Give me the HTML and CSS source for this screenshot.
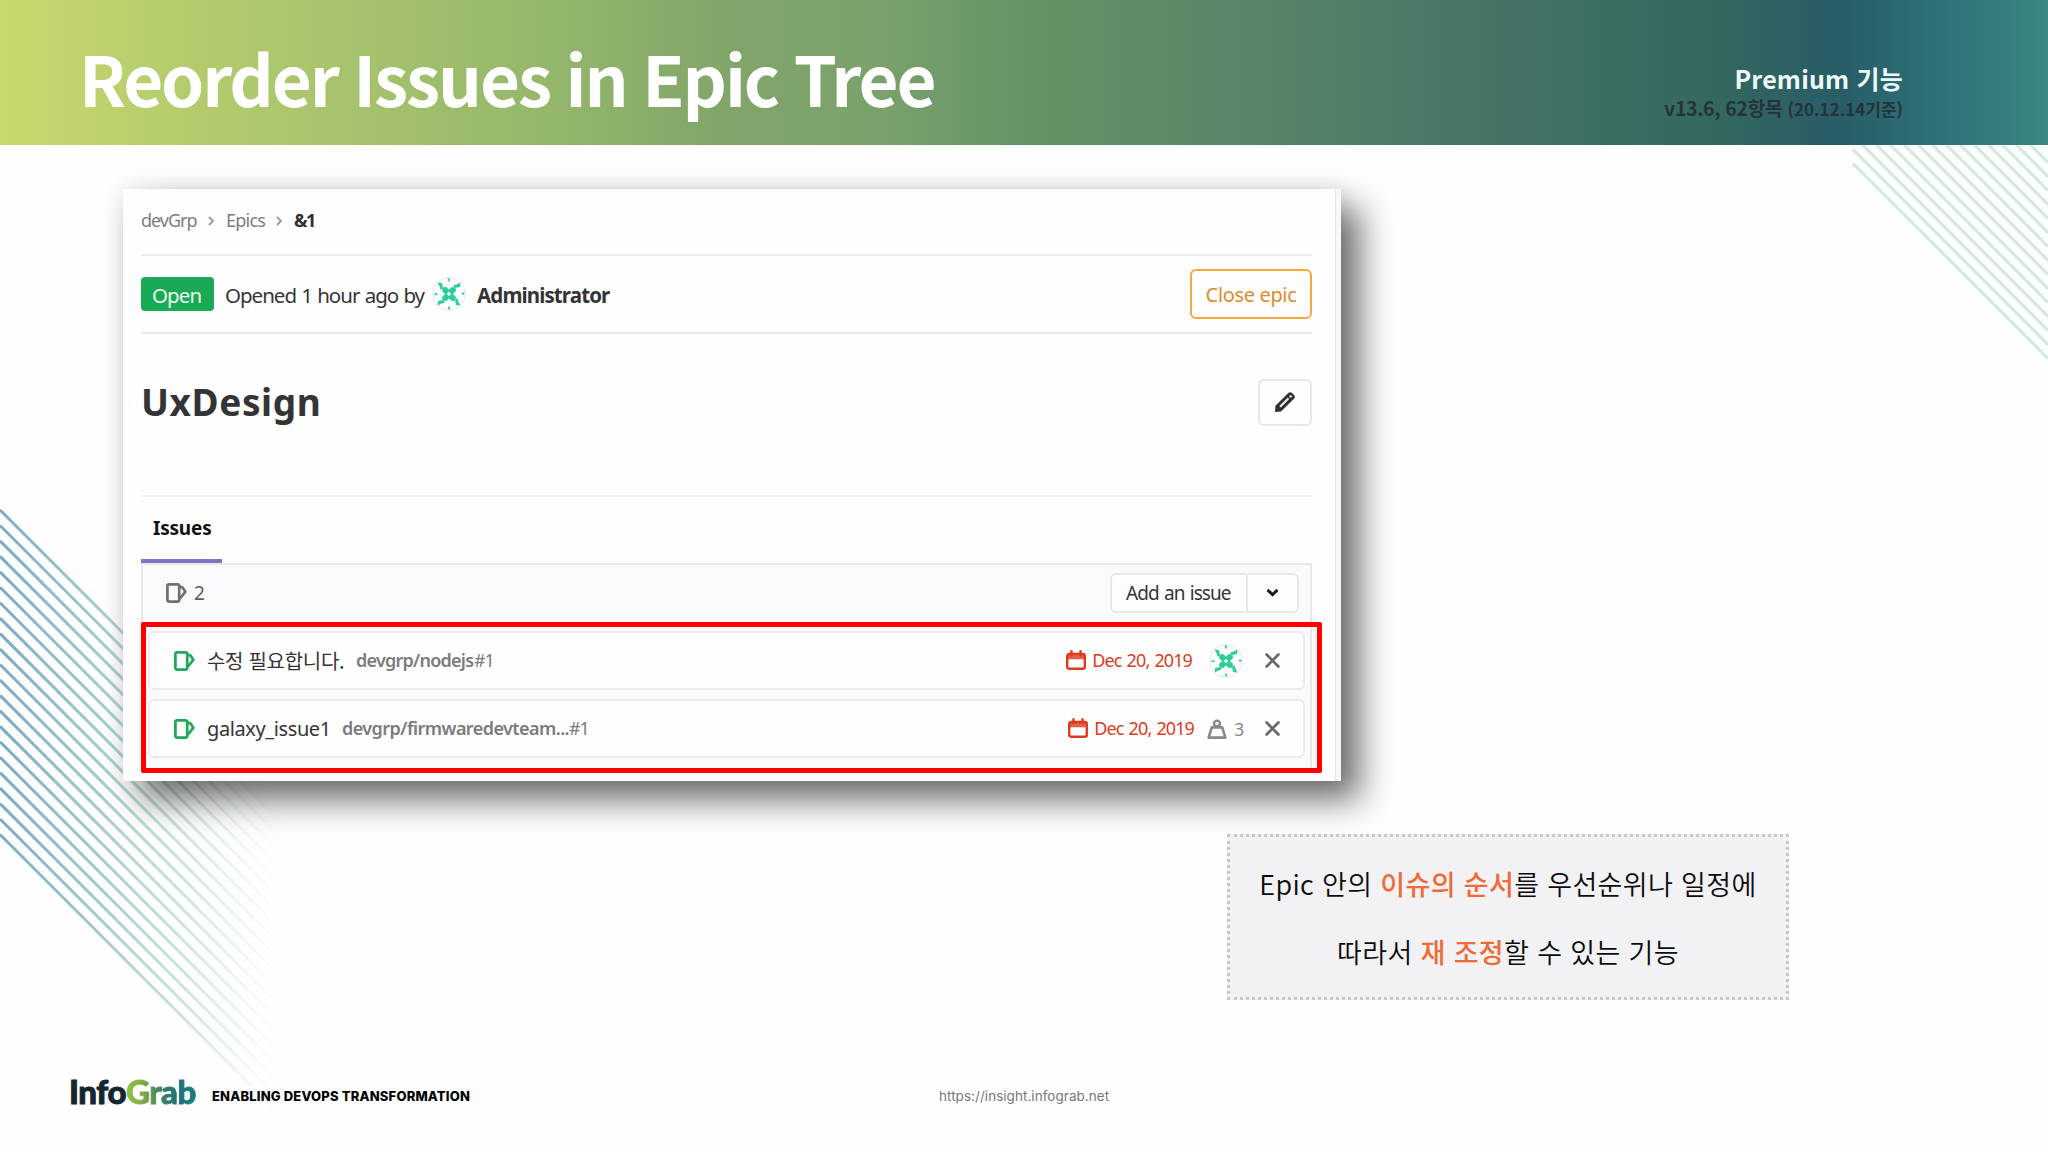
FILE: index.html
```
<!DOCTYPE html>
<html lang="ko">
<head>
<meta charset="utf-8">
<title>Reorder Issues in Epic Tree</title>
<link rel="stylesheet" href="styles.css">
</head>
<body>
<svg class="defs" width="0" height="0" aria-hidden="true">
  <symbol id="issue" viewBox="0 0 21 20">
    <rect x="1.4" y="1.4" width="11.8" height="17.2" rx="1.8" fill="none" stroke="currentColor" stroke-width="2.7"/>
    <path d="M13 3.4 L16.6 4.6 L19.3 8.8 L13.6 16" fill="none" stroke="currentColor" stroke-width="2.7" stroke-linejoin="round"/>
  </symbol>
  <symbol id="calendar" viewBox="0 0 20 20">
    <rect x="1.2" y="4" width="17.6" height="14.8" rx="2" fill="none" stroke="currentColor" stroke-width="2.4"/>
    <path d="M1 4.5h18v4.8H1z" fill="currentColor" opacity=".8"/>
    <path d="M5.5 1.2v4M14.5 1.2v4" stroke="currentColor" stroke-width="2.4" stroke-linecap="round"/>
  </symbol>
  <symbol id="close" viewBox="0 0 15 15">
    <path d="M1.6 1.6l11.8 11.8M13.4 1.6L1.6 13.4" stroke="currentColor" stroke-width="2.8" stroke-linecap="round"/>
  </symbol>
  <symbol id="angle" viewBox="0 0 8 12">
    <path d="M2 2l4 4-4 4" fill="none" stroke="currentColor" stroke-width="1.8"/>
  </symbol>
  <symbol id="identicon" viewBox="0 0 34 34">
    <circle cx="17" cy="17" r="16.3" fill="#fff" stroke="#e4e6e8"/>
    <g fill="#2bcf96">
      <circle cx="13.1" cy="13.1" r="3"/><circle cx="20.9" cy="13.1" r="3"/>
      <circle cx="13.1" cy="20.9" r="3"/><circle cx="20.9" cy="20.9" r="3"/>
      <path d="M12.5 12.2h9v9.6h-9z M14.8 17L17 14.8 19.2 17 17 19.2z" fill-rule="evenodd"/>
      <path d="M5.5 5.5l4.5.5 1 5-2.4 2-1-3.6z"/>
      <path d="M28.5 5.5l-.5 4.5-5 1-2-2.4 3.6-1z"/>
      <path d="M28.5 28.5l-4.5-.5-1-5 2.4-2 1 3.6z"/>
      <path d="M5.5 28.5l.5-4.5 5-1 2 2.4-3.6 1z"/>
      <path d="M15.3 1.5h3l-1 4.2z M15.6 32.3h3l-1.6-4z M1.5 17.4l3.6-1.8v3z M32.4 15.2l-3.6 1 3.2 2z"/>
    </g>
  </symbol>
  <linearGradient id="fade" gradientUnits="userSpaceOnUse" x1="0" y1="0" x2="285" y2="0">
    <stop offset="0" stop-color="#78aac6"/>
    <stop offset=".35" stop-color="#98c6c6" stop-opacity=".9"/>
    <stop offset=".65" stop-color="#b2d8cc" stop-opacity=".65"/>
    <stop offset="1" stop-color="#dcefe6" stop-opacity="0"/>
  </linearGradient>
</svg>

<svg class="stripes" viewBox="0 0 2048 1152" aria-hidden="true">
  <g id="stripesLeft" stroke="url(#fade)" stroke-width="3"></g>
  <g id="stripesRight" stroke="#d3ecdd" stroke-width="3.2"></g>
</svg>

<div class="slide">
  <header class="banner">
    <h1 class="banner-title">Reorder Issues in Epic Tree</h1>
    <div class="banner-info">
      <div class="tier">Premium 기능</div>
      <div class="version">v13.6, 62항목 <span class="asof">(20.12.14기준)</span></div>
    </div>
  </header>

  <main class="content">
    <section class="shot">
      <nav class="crumbs">
        <span class="crumb-group">devGrp</span>
        <svg class="angle"><use href="#angle"/></svg>
        <span class="crumb-epics">Epics</span>
        <svg class="angle"><use href="#angle"/></svg>
        <b class="crumb-id">&amp;1</b>
      </nav>
      <div class="meta">
        <span class="badge">Open</span>
        <span class="opened">Opened 1 hour ago by</span>
        <svg class="avatar"><use href="#identicon"/></svg>
        <b class="author">Administrator</b>
        <span class="close-epic">Close epic</span>
      </div>
      <div class="heading">
        <h2 class="epic-title">UxDesign</h2>
        <span class="edit">
          <svg width="22" height="22" viewBox="0 0 22 22"><path d="M1 21l.4-6.2L14.6 1.8q1.6-1.3 3.2 0l2.4 2.4q1.4 1.6 0 3.2L7 20.6z" fill="#2e2e33"/><path d="M6.6 15.2l7.2-7.2" stroke="#e8e8ea" stroke-width="2.2" stroke-linecap="round"/><circle cx="16.6" cy="5.4" r="1.2" fill="#fff"/></svg>
        </span>
      </div>
      <div class="tabs"><span class="tab">Issues</span></div>
      <div class="panel">
        <div class="panel-head">
          <svg class="issue-icon"><use href="#issue"/></svg>
          <span class="count">2</span>
          <span class="add">
            <span class="add-label">Add an issue</span>
            <span class="add-toggle"><svg width="13" height="9" viewBox="0 0 13 9"><path d="M1.5 1.8l5 4.8 5-4.8" fill="none" stroke="#1f1f1f" stroke-width="3"/></svg></span>
          </span>
        </div>
        <ul class="rows">
          <li class="row">
            <svg class="issue-icon open"><use href="#issue"/></svg>
            <span class="name ko">수정 필요합니다.</span>
            <span class="path short">devgrp/nodejs</span><span class="num">#1</span>
            <span class="due"><svg class="cal"><use href="#calendar"/></svg><span>Dec 20, 2019</span></span>
            <span class="extra"><svg class="avatar"><use href="#identicon"/></svg></span>
            <svg class="x"><use href="#close"/></svg>
          </li>
          <li class="row">
            <svg class="issue-icon open"><use href="#issue"/></svg>
            <span class="name en">galaxy_issue1</span>
            <span class="path">devgrp/firmwaredevteam...</span><span class="num">#1</span>
            <span class="due"><svg class="cal"><use href="#calendar"/></svg><span>Dec 20, 2019</span></span>
            <span class="extra weight"><svg width="20" height="20" viewBox="0 0 20 20"><path d="M4.8 8.4h10.4L18.4 18.6H1.6z" fill="none" stroke="currentColor" stroke-width="2.6" stroke-linejoin="round"/><circle cx="10" cy="4.6" r="3" fill="none" stroke="currentColor" stroke-width="2.4"/></svg><span>3</span></span>
            <svg class="x"><use href="#close"/></svg>
          </li>
        </ul>
      </div>
      <div class="highlight"></div>
    </section>

    <aside class="note">
      <p>Epic 안의 <em>이슈의 순서</em>를 우선순위나 일정에</p>
      <p>따라서 <em>재 조정</em>할 수 있는 기능</p>
    </aside>
  </main>

  <footer class="foot">
    <span class="logo">Info<span class="logo-accent">Grab</span></span>
    <span class="slogan">ENABLING DEVOPS TRANSFORMATION</span>
    <span class="url">https://insight.infograb.net</span>
  </footer>
</div>
<script src="stripes.js"></script>
</body>
</html>
```
FILE: stripes.js
```
// Draws the 45-degree hatch lines on both edges of the slide.
function hatch(id, x0, x1, yFirst, step, count, yMin) {
  let out = '';
  for (let i = 0; i < count; i++) {
    const y = yFirst + i * step;
    const start = Math.max(x0, x0 + (yMin - y));
    out += `<line x1="${start}" y1="${y + start - x0}" x2="${x1}" y2="${y + x1 - x0}"/>`;
  }
  document.getElementById(id).innerHTML = out;
}
hatch('stripesLeft', 0, 285, 510, 15.45, 22, 0);
hatch('stripesRight', 1853, 2048, -32.5, 14, 15, 145);
```
FILE: styles.css
```
* { box-sizing: border-box; }
body {
  margin: 0;
  width: 2048px;
  height: 1152px;
  overflow: hidden;
  background: #fefefe;
  font-family: "Noto Sans", "Noto Sans CJK KR", sans-serif;
  color: #343436;
}
h1, h2, p, ul { margin: 0; padding: 0; list-style: none; }
svg { display: block; flex: none; }
span, b { white-space: nowrap; }
.defs { position: absolute; }
.stripes { position: absolute; left: 0; top: 0; width: 2048px; height: 1152px; }

.slide { position: relative; display: flex; flex-direction: column; height: 1152px; }

.banner {
  display: flex;
  justify-content: space-between;
  height: 145px;
  padding: 27px 145px 0 79px;
  font-family: "Noto Sans CJK KR", sans-serif;
  font-weight: 700;
  background: linear-gradient(90deg, #c8d86e 0, #b4cc6d 9%, #a3c06c 19%, #93b76b 27%, #82a56a 35%, #7ba16c 43%, #669567 49%, #5a8768 60%, #457467 73%, #3c6f63 78%, #33675f 84%, #285c67 90%, #2d6f76 94%, #36837f 99%, #3b8b81 100%);
}
.banner-title { font-size: 69px; line-height: 100px; letter-spacing: -2.1px; word-spacing: -1.6px; color: #fff; }
.banner-info { padding-top: 36px; text-align: right; }
.tier { font-size: 25px; line-height: 31px; color: #eef8fb; letter-spacing: .2px; }
.version { font-size: 19.5px; line-height: 27px; color: #24343a; letter-spacing: -.4px; }
.asof { font-size: 17px; letter-spacing: 0; }

.content { flex: 1; padding-top: 44px; }
.shot {
  position: relative;
  width: 1218px;
  height: 592px;
  margin-left: 123px;
  padding: 0 29px 0 18px;
  background: linear-gradient(90deg, transparent 1212px, #e6e3e9 1212px, #e6e3e9 1213px, #f8f7f9 1213px) #fefefe;
  box-shadow: 19px 19px 32px rgba(0,0,0,.56), 0 0 20px rgba(60,40,80,.11);
}
.crumbs { display: flex; align-items: center; height: 65px; padding-bottom: 4px; font-size: 18px; color: #7c7c80; }
.crumb-group { width: 64px; letter-spacing: -1px; }
.angle { width: 8px; height: 12px; margin: 2px 11px 0 2px; color: #9a9a9e; }
.crumb-epics { width: 47px; letter-spacing: -.75px; }
.crumb-id { color: #2e2e2e; letter-spacing: -1.6px; }

.meta {
  display: flex;
  align-items: center;
  height: 80px;
  border-top: 2px solid #ececef;
  border-bottom: 2px solid #ececef;
  font-size: 20.5px;
}
.badge { width: 73px; height: 34px; line-height: 36px; padding-left: 11px; border-radius: 4px; background: #1aaa55; color: #eafbf1; letter-spacing: -.9px; }
.opened { width: 207px; margin-left: 11px; padding-top: 1px; letter-spacing: -1px; word-spacing: .9px; }
.avatar { width: 34px; height: 34px; }
.author { margin-left: 11px; padding-top: 1px; letter-spacing: -.88px; }
.close-epic {
  width: 122px; height: 50px; line-height: 48px; margin-left: auto;
  border: 2px solid #f2a93d; border-radius: 6px;
  text-align: center; font-size: 20px; letter-spacing: -.35px; color: #de8a2b;
}

.heading { display: flex; align-items: center; justify-content: space-between; height: 161px; padding: 0 0 25px; }
.epic-title { font-size: 37px; line-height: 50px; letter-spacing: .6px; }
.edit { display: flex; align-items: center; justify-content: center; width: 54px; height: 47px; border: 2px solid #e8e6ec; border-radius: 6px; }

.tabs { height: 68px; border-top: 2px solid #f3f3f5; display: flex; }
.tab { width: 81px; padding: 0 0 0 12px; border-bottom: 4px solid #7d76c0; font-size: 19px; font-weight: 700; line-height: 63px; color: #111; letter-spacing: -.2px; }

.panel { height: 206px; width: 1171px; border: 2px solid #e9e9ec; border-bottom: 0; background: #faf9fc; }
.panel-head { display: flex; align-items: center; height: 57px; padding: 0 11px 2px 23px; }
.issue-icon { width: 21px; height: 20px; color: #707074; }
.count { margin-left: 7px; font-size: 19px; color: #5c5c60; }
.add { display: flex; width: 189px; height: 40px; margin-left: auto; border: 2px solid #e8e7eb; border-radius: 6px; background: #fefefe; font-size: 19px; }
.add-label { width: 136px; line-height: 37px; padding-left: 14px; border-right: 2px solid #e8e7eb; letter-spacing: -.95px; word-spacing: 1.3px; }
.add-toggle { flex: 1; display: flex; align-items: center; justify-content: center; padding-bottom: 1px; }

.rows { display: flex; flex-direction: column; gap: 9px; padding: 9px 5px 0 5px; }
.row { display: flex; align-items: center; height: 59px; padding: 0 23px; border: 2px solid #ebebee; border-radius: 6px; background: #fefefe; font-size: 18px; }
.open { color: #1fa85a; margin-left: 1px; }
.name { margin-left: 12px; font-size: 20px; }
.ko { width: 149px; padding-bottom: 1px; font-family: "Noto Sans CJK KR", sans-serif; font-size: 20px; letter-spacing: -.3px; }
.en { width: 135px; letter-spacing: -.4px; }
.path { color: #7b7b80; font-weight: 600; letter-spacing: -.56px; width: 227px; padding-bottom: 1px; }
.short { width: 118px; letter-spacing: -.76px; }
.num { color: #7b7b80; letter-spacing: -1.2px; padding-bottom: 1px; }
.due { display: flex; align-items: center; gap: 6px; margin-left: auto; padding-bottom: 1px; color: #db3b21; letter-spacing: -.9px; word-spacing: 1.3px; }
.cal { width: 20px; height: 20px; }
.extra { display: flex; align-items: center; width: 56px; margin-left: 17px; }
.weight { width: 58px; margin-left: 13px; gap: 7px; color: #88888c; }
.x { width: 15px; height: 15px; color: #6b6b70; }

.highlight { position: absolute; left: 18px; top: 433px; width: 1181px; height: 151px; border: 5px solid #fe0000; border-radius: 2px; }

.note {
  width: 562px;
  height: 166px;
  margin: 53px 0 0 1227px;
  padding-top: 13px;
  border: 3px dotted #c9c8cc;
  background: #f2f1f3;
  font: 350 27px/68px "Noto Sans CJK KR", sans-serif;
  text-align: center;
  color: #0c0c0c;
  letter-spacing: .35px;
}
.note em { font-style: normal; font-weight: 500; color: #ec6b36; }

.foot { display: flex; align-items: center; height: 84px; padding: 0 0 28px 69px; font-family: Inter, sans-serif; }
.logo { width: 143px; margin-top: -10px; font: 900 33px/50px Lato, sans-serif; letter-spacing: -.4px; color: #14262e; -webkit-text-stroke: .9px #14262e; }
.logo-accent { background: linear-gradient(90deg, #93c23f 0, #79ab45 25%, #3f7f66 50%, #1f7276 75%, #1b8081 100%); -webkit-background-clip: text; background-clip: text; color: transparent; -webkit-text-stroke: .9px transparent; }
.slogan { width: 727px; font-size: 13px; font-weight: 800; color: #000; letter-spacing: .18px; }
.url { font-size: 13.5px; color: #77777b; letter-spacing: .04px; }
```
